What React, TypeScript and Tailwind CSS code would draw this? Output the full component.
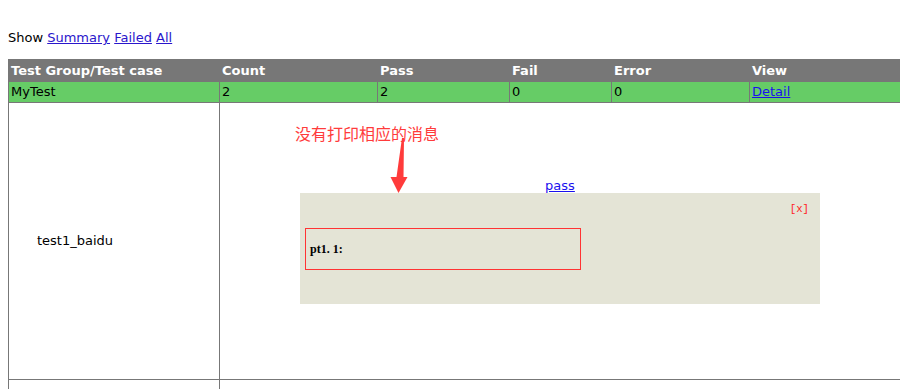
import React from 'react';

const cols = [211, 158, 132, 102, 138, 151];

const App: React.FC = () => {
  return (
    <div className="relative min-h-[389px] bg-white text-black font-['DejaVu_Sans',Verdana,sans-serif] text-[13px]">
      {/* linea de filtros */}
      <p className="pl-2 pt-[30px] leading-[15px] h-[59px]">
        Show{' '}
        <a href="#" className="text-[#2a16cc] underline">Summary</a>{' '}
        <a href="#" className="text-[#2a16cc] underline">Failed</a>{' '}
        <a href="#" className="text-[#2a16cc] underline">All</a>
      </p>

      <table className="ml-2 w-[892px] table-fixed border-collapse border border-[#777]">
        <colgroup>
          {cols.map((w, i) => (
            <col key={i} style={{ width: w }} />
          ))}
        </colgroup>
        <tbody>
          <tr className="h-[22px] bg-[#777] text-white font-bold">
            <td className="border border-[#777] px-[2px] py-0">Test Group/Test case</td>
            <td className="border border-[#777] px-[2px] py-0">Count</td>
            <td className="border border-[#777] px-[2px] py-0">Pass</td>
            <td className="border border-[#777] px-[2px] py-0">Fail</td>
            <td className="border border-[#777] px-[2px] py-0">Error</td>
            <td className="border border-[#777] px-[2px] py-0">View</td>
          </tr>
          <tr className="h-[20px] bg-[#66cc66]">
            <td className="border border-[#777] px-[2px] py-0">MyTest</td>
            <td className="border border-[#777] px-[2px] py-0">2</td>
            <td className="border border-[#777] px-[2px] py-0">2</td>
            <td className="border border-[#777] px-[2px] py-0">0</td>
            <td className="border border-[#777] px-[2px] py-0">0</td>
            <td className="border border-[#777] px-[2px] py-0">
              <a href="#" className="text-[#1a10ee] underline">Detail</a>
            </td>
          </tr>
          <tr className="h-[277px]">
            <td className="border border-[#777] pl-[28px] pr-[2px] align-middle">test1_baidu</td>
            <td colSpan={5} className="border border-[#777] p-[2px] text-center align-middle">
              <div className="h-[15px] leading-[15px]">
                <a href="#" className="text-[#1a10ee] underline">pass</a>
              </div>
              <div className="relative mx-auto h-[111px] w-[520px] bg-[#e4e4d6] p-[10px] text-left font-['Liberation_Mono',monospace] text-[10.67px]">
                <div className="text-right leading-[13px] text-[#ff2020] pr-[1px]">[x]</div>
                <div className="pt-[26px] leading-[14px] font-['Liberation_Serif',serif] font-bold text-[12px]">pt1. 1:</div>
                {/* recuadro rojo de la anotacion */}
                <div className="absolute left-[5px] top-[35px] h-[42px] w-[276px] border border-[#ff3333]" />
              </div>
            </td>
          </tr>
          <tr className="h-[30px]">
            <td className="border border-[#777]"></td>
            <td colSpan={5} className="border border-[#777]"></td>
          </tr>
        </tbody>
      </table>

      {/* anotacion: texto y flecha */}
      <div className="absolute left-[295px] top-[125px] text-[16px] leading-[16px] text-[#ff3b3b] font-['Noto_Sans_CJK_SC',sans-serif]">
        没有打印相应的消息
      </div>
      <svg className="absolute left-0 top-0" width="900" height="389" viewBox="0 0 900 389">
        <polygon
          points="402,138 404,138 403.5,177 407.5,177 398.5,193 390.5,177 396.5,177"
          fill="#ff3b3b"
        />
      </svg>
    </div>
  );
};

export default App;
